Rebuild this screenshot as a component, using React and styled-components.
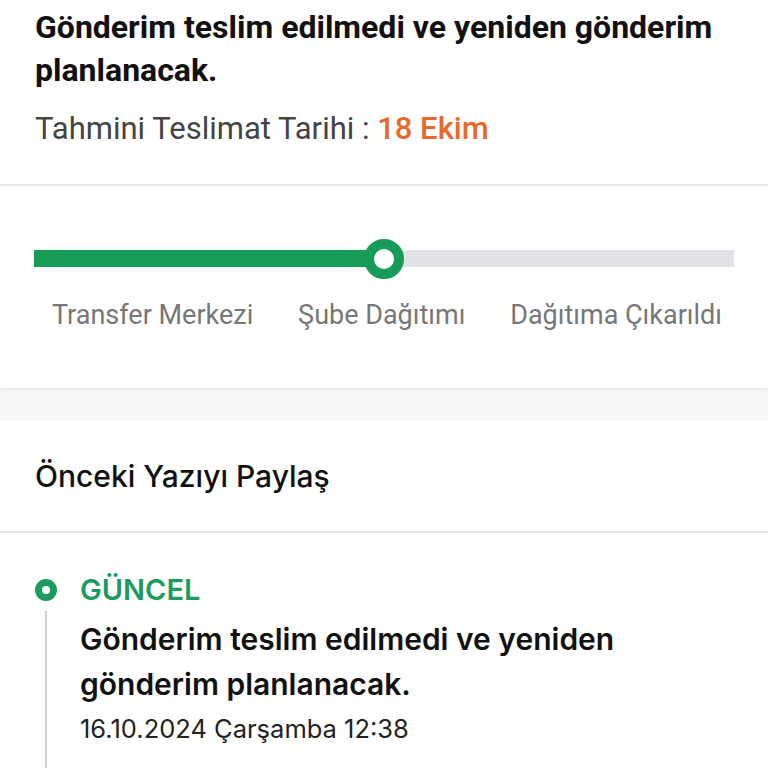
import styled, { createGlobalStyle } from 'styled-components';

const GlobalStyle = createGlobalStyle`
  html, body {
    margin: 0;
    padding: 0;
    background: #ffffff;
  }
  * { box-sizing: border-box; }
`;

const Page = styled.div`
  width: 768px;
  height: 768px;
  overflow: hidden;
  background: #f8f8f8;
`;

const Summary = styled.div`
  background: #fff;
  padding: 6px 35px 37px;
  border-bottom: 2px solid #e6e6e6;
  font-family: Roboto, "Liberation Sans", sans-serif;
`;

const Title = styled.h1`
  margin: 0;
  font-size: 32px;
  font-weight: 700;
  line-height: 43px;
  color: #111;
`;

const Estimate = styled.div`
  margin-top: 19px;
  font-size: 31px;
  line-height: 36px;
  color: #444;
`;

const Highlight = styled.span`
  color: #e8692e;
  font-weight: 500;
`;

const Progress = styled.div`
  background: #fff;
  padding: 64px 34px 57px;
  box-shadow: 0 2px 3px rgba(0, 0, 0, 0.06);
  font-family: Roboto, "Liberation Sans", sans-serif;
`;

const Track = styled.div`
  position: relative;
  height: 17px;
  background: #e1e2e5;
`;

const Fill = styled.div`
  height: 100%;
  background: #169c57;
`;

const Knob = styled.div`
  position: absolute;
  top: 50%;
  width: 40px;
  height: 40px;
  margin: -20px 0 0 -20px;
  border-radius: 50%;
  border: 10px solid #169c57;
  background: #fff;
`;

const Labels = styled.div`
  display: flex;
  justify-content: space-between;
  padding: 0 12px 0 18px;
  margin-top: 32px;
`;

const Label = styled.span`
  font-size: 27px;
  line-height: 32px;
  color: #777;
`;

const Card = styled.div`
  margin-top: 33px;
  background: #fff;
  font-family: Inter, "Noto Sans", sans-serif;
`;

const CardHeader = styled.div`
  padding: 0 35px;
  height: 112px;
  display: flex;
  align-items: center;
  border-bottom: 2px solid #e6e6e6;
  font-size: 30px;
  font-weight: 500;
  color: #111;
`;

const Timeline = styled.div`
  padding: 40px 35px 0;
`;

const Event = styled.div`
  display: grid;
  grid-template-columns: 22px 1fr;
  column-gap: 23px;
`;

const Rail = styled.div`
  display: flex;
  flex-direction: column;
  align-items: center;
`;

const Dot = styled.div`
  width: 22px;
  height: 22px;
  border-radius: 50%;
  border: 7px solid #1e9a60;
  background: #fff;
  margin-top: 6px;
`;

const Line = styled.div`
  flex: 1;
  width: 2px;
  background: #d0d0d0;
  margin-top: 10px;
  min-height: 200px;
`;

const Status = styled.div`
  font-size: 29px;
  font-weight: 600;
  line-height: 34px;
  color: #1e9a60;
`;

const Message = styled.div`
  margin-top: 10px;
  font-size: 30px;
  font-weight: 600;
  line-height: 45px;
  color: #111;
`;

const Stamp = styled.div`
  margin-top: 6px;
  font-size: 25.5px;
  line-height: 32px;
  color: #222;
`;

export default function App() {
  const progress = 50;
  return (
    <Page>
      <GlobalStyle />
      <Summary>
        <Title>Gönderim teslim edilmedi ve yeniden gönderim planlanacak.</Title>
        <Estimate>
          Tahmini Teslimat Tarihi : <Highlight>18 Ekim</Highlight>
        </Estimate>
      </Summary>
      <Progress>
        <Track>
          <Fill style={{ width: `${progress}%` }} />
          <Knob style={{ left: `${progress}%` }} />
        </Track>
        <Labels>
          <Label>Transfer Merkezi</Label>
          <Label>Şube Dağıtımı</Label>
          <Label>Dağıtıma Çıkarıldı</Label>
        </Labels>
      </Progress>
      <Card>
        <CardHeader>Önceki Yazıyı Paylaş</CardHeader>
        <Timeline>
          <Event>
            <Rail>
              <Dot />
              <Line />
            </Rail>
            <div>
              <Status>GÜNCEL</Status>
              <Message>Gönderim teslim edilmedi ve yeniden gönderim planlanacak.</Message>
              <Stamp>16.10.2024 Çarşamba 12:38</Stamp>
            </div>
          </Event>
        </Timeline>
      </Card>
    </Page>
  );
}
